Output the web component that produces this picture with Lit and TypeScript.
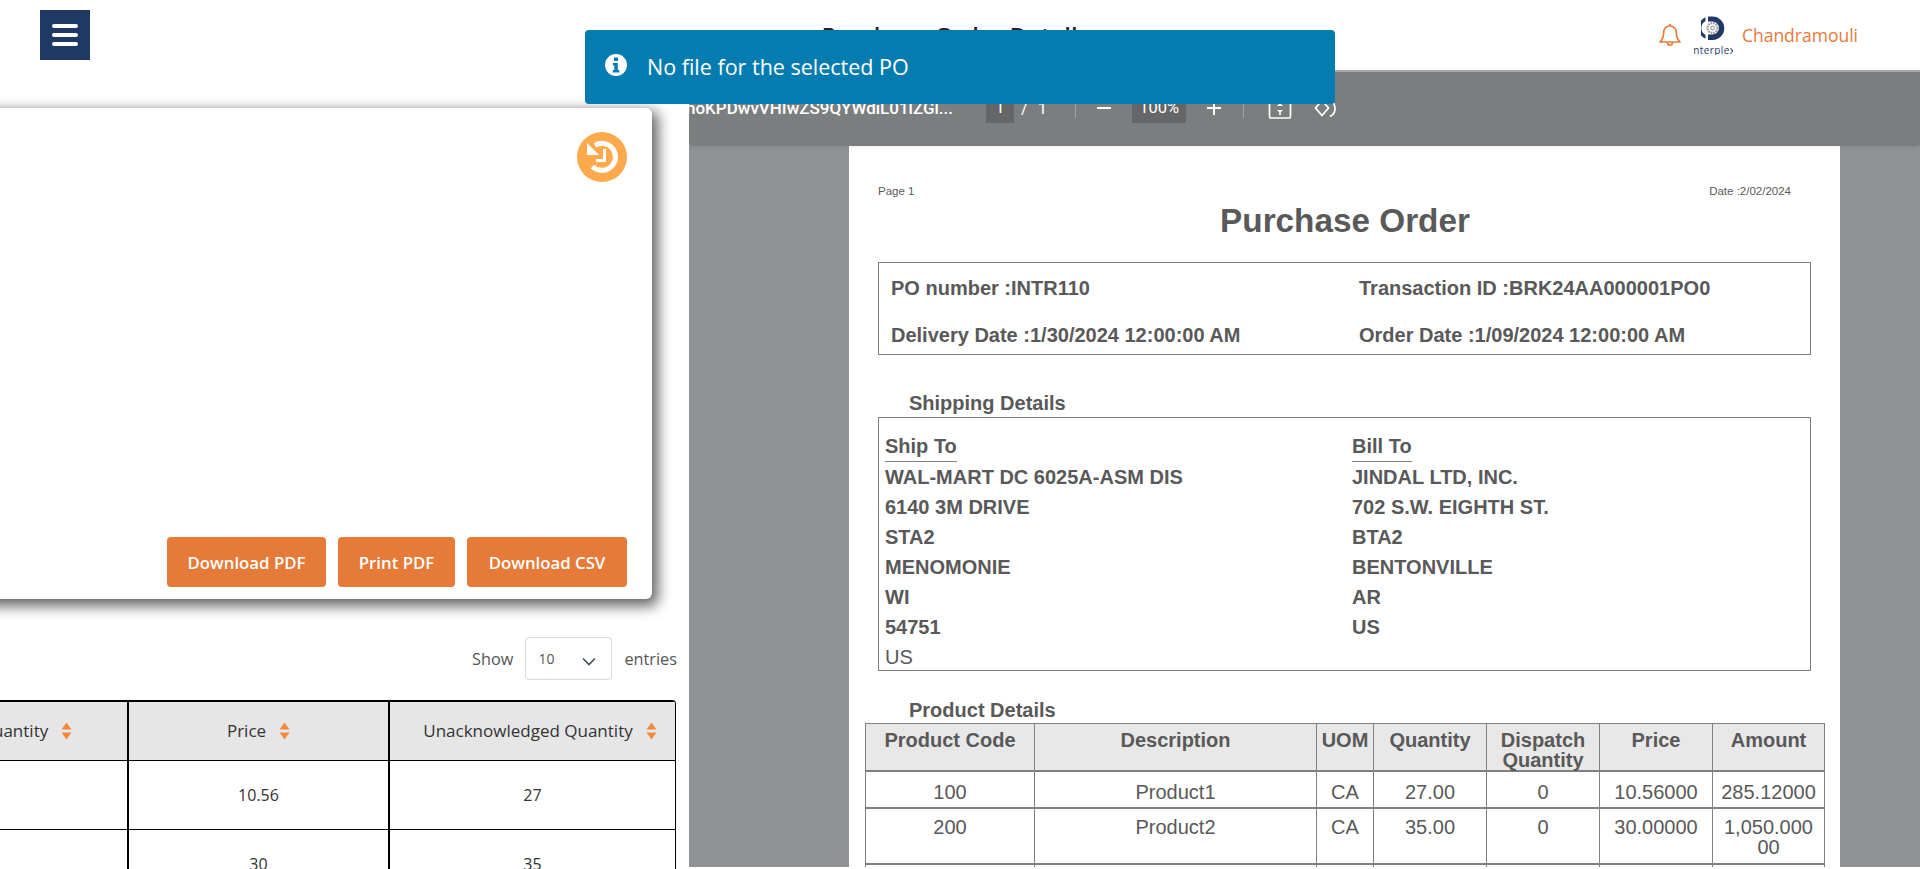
import { LitElement, html, css, svg } from "lit";
import { customElement } from "lit/decorators.js";

const SHIP = ["WAL-MART DC 6025A-ASM DIS", "6140 3M DRIVE", "STA2", "MENOMONIE", "WI", "54751"];
const BILL = ["JINDAL LTD, INC.", "702 S.W. EIGHTH ST.", "BTA2", "BENTONVILLE", "AR", "US"];

const PRODUCTS = [
  ["100", "Product1", "CA", "27.00", "0", "10.56000", "285.12000"],
  ["200", "Product2", "CA", "35.00", "0", "30.00000", "1,050.000 00"],
  ["", "", "", "", "", "", ""],
];

const sortIcon = html`<svg class="sort" viewBox="0 0 11 18" width="11" height="18">
  <path d="M5.5 0.5 10.5 7.5H0.5Z" fill="#f28a3c" />
  <path d="M5.5 17.5 10.5 10.5H0.5Z" fill="#f28a3c" />
</svg>`;

const gear = svg`<circle cx="11.500" cy="12" r="5" fill="none" stroke="#a0a0a0" stroke-width="2.200" stroke-dasharray="1.800 0.800" />
  <circle cx="11.500" cy="12" r="1.800" fill="none" stroke="#a0a0a0" stroke-width="1.200" />`;

@customElement("app-root")
export class AppRoot extends LitElement {
  static styles = css`
    :host {
      display: block;
      position: relative;
      height: 869px;
      overflow: hidden;
      background: #fff;
      font-family: "Open Sans", sans-serif;
      color: #333;
    }
    header {
      height: 70px;
      display: flex;
      align-items: center;
      padding: 0 62px 0 40px;
      box-sizing: border-box;
      background: #fff;
      position: relative;
    }
    .menu {
      width: 50px;
      height: 50px;
      background: #1f3864;
      display: flex;
      align-items: center;
      justify-content: center;
    }
    h1 {
      flex: 1;
      margin: 0;
      text-align: center;
      font-size: 24px;
      font-weight: 600;
      color: #222;
      padding-left: 162px;
    }
    .user {
      display: flex;
      align-items: center;
      color: #e8793a;
      font-size: 17.5px;
    }
    .logo {
      display: flex;
      flex-direction: column;
      align-items: center;
      width: 40px;
      margin: 0 9px 0 12px;
      overflow: hidden;
    }
    .logo span {
      font-size: 10px;
      letter-spacing: 0.4px;
      line-height: 9px;
      margin-top: 6px;
      color: #1f3864;
      white-space: nowrap;
    }
    main {
      display: flex;
      align-items: flex-start;
      height: 799px;
    }
    .left {
      width: 689px;
      height: 799px;
      flex: none;
      overflow: hidden;
      padding-top: 38px;
      box-sizing: border-box;
    }
    .card {
      margin-left: -20px;
      width: 672px;
      height: 491px;
      box-sizing: border-box;
      background: #fff;
      border-radius: 6px;
      box-shadow: 4px 5px 14px 2px rgba(0, 0, 0, 0.62);
      padding: 24px 25px 12px 0;
      display: flex;
      flex-direction: column;
      justify-content: space-between;
      align-items: flex-end;
    }
    .restart {
      width: 50px;
      height: 50px;
      display: block;
    }
    .actions {
      display: flex;
      gap: 12px;
    }
    .actions button {
      height: 50px;
      border: none;
      border-radius: 4px;
      background: #e67a38;
      color: #fff;
      font: 600 16.800px "Open Sans", sans-serif;
      padding: 0;
    }
    .b1 { width: 159px; }
    .b2 { width: 117px; }
    .b3 { width: 160px; }
    .entries {
      display: flex;
      justify-content: flex-end;
      align-items: center;
      gap: 12px;
      margin: 38px 12px 20px 0;
      height: 43px;
      font-size: 16.300px;
      color: #555;
    }
    .select {
      width: 87px;
      height: 43px;
      box-sizing: border-box;
      border: 1px solid #d8dadd;
      border-radius: 4px;
      display: flex;
      align-items: center;
      justify-content: space-between;
      padding: 0 15px 0 12px;
      font-size: 14px;
    }
    .select svg { margin-top: 6px; }
    .wrap {
      display: flex;
      justify-content: flex-end;
      margin-right: 13px;
    }
    table.list {
      flex: none;
      width: 746px;
      table-layout: fixed;
      border-collapse: separate;
      border-spacing: 0;
      border-top: 2px solid #000;
      border-right: 1px solid #000;
      border-top-right-radius: 4px;
    }
    .list th,
    .list td {
      border-right: 2px solid #000;
      border-bottom: 1.5px solid #000;
      text-align: center;
      font-size: 16px;
      color: #333;
      padding: 0;
    }
    .list tr > :last-child { border-right: none; }
    .list th {
      height: 56px;
      padding-bottom: 2px;
      background: #e6e6e6;
      font-size: 17px;
      font-weight: 500;
      white-space: nowrap;
    }
    .list th:first-child { padding-right: 4px; }
    .list th:last-child { padding-left: 15px; }
    .list td { height: 68px; }
    .sort {
      margin-left: 13px;
      vertical-align: -3px;
    }
    .viewer {
      flex: 1;
      height: 797px;
      background: #8f9294;
      overflow: hidden;
      border-top: 2px solid #a6a8a9;
      box-sizing: border-box;
    }
    .toolbar {
      height: 72px;
      background: #7b7e7f;
      box-shadow: 0 1px 4px rgba(0, 0, 0, 0.25);
      display: flex;
      align-items: center;
      color: #fff;
      font: 400 16.500px Roboto, sans-serif;
      position: relative;
    }
    .name {
      width: 300px;
      flex: none;
      white-space: nowrap;
      overflow: hidden;
      margin-left: -3px;
      font-size: 17px;
      font-weight: 500;
    }
    .tb-box {
      background: #646667;
      height: 20px;
      line-height: 20px;
      text-align: center;
      display: inline-block;
      padding: 5px 0;
    }
    .pg { width: 28px; }
    .zoom { width: 54px; margin: 0 20px; }
    .sep {
      width: 1px;
      height: 20px;
      background: #a2a4a5;
    }
    .sep1 { margin: 0 20px 0 28px; }
    .sep2 { margin: 0 24px 0 21px; }
    .slash { margin: 0 10px 0 7px; }
    .icon { display: block; flex: none; }
    .rotate { margin-left: 22px; }
    .page {
      margin: 2px 0 0 160px;
      width: 991px;
      background: #fff;
      color: #595959;
      font-family: "Liberation Sans", Arial, sans-serif;
      font-size: 20px;
      font-weight: 700;
      padding-top: 38px;
      box-sizing: border-box;
      height: 900px;
    }
    .meta {
      display: flex;
      justify-content: space-between;
      font-size: 11.500px;
      font-weight: 400;
      line-height: 14px;
      margin: 0 49px 2px 29px;
    }
    h2 {
      margin: 0;
      text-align: center;
      font-size: 33.300px;
      line-height: 42px;
      width: 992px;
    }
    .box {
      margin: 20px 0 0 29px;
      width: 933px;
      box-sizing: border-box;
      border: 1px solid #808080;
    }
    .info {
      height: 93px;
      display: grid;
      grid-template-columns: 468px 1fr;
      grid-auto-rows: 47px;
      padding: 1.500px 0 0 12px;
    }
    .info div, .addr div {
      white-space: nowrap;
    }
    .info div { line-height: 47px; }
    .sec {
      margin: 36px 0 2px 60px;
      line-height: 24px;
      font-size: 20px;
    }
    .addr {
      margin-top: 0;
      height: 254px;
      display: grid;
      grid-template-columns: 467px 1fr;
      padding: 13px 0 0 6px;
    }
    .addr div { line-height: 30px; }
    .addr .hd { line-height: 31px; }
    .addr .hd span {
      display: inline-block;
      line-height: 29px;
      border-bottom: 1px solid #808080;
    }
    .addr .reg { font-weight: 400; }
    .sec.second { margin: 27px 0 1px 60px; }
    table.po {
      margin-left: 16px;
      width: 959px;
      table-layout: fixed;
      border-collapse: collapse;
      font-size: 20px;
      line-height: 20px;
    }
    .po th, .po td {
      border: 1px solid #808080;
      text-align: center;
      vertical-align: top;
      padding: 6px 0 0;
    }
    .po th {
      background: #e8e8e8;
      height: 40px;
      border-bottom-width: 2px;
    }
    .po td { font-weight: 400; }
    .po tr:nth-child(1) td { padding-top: 10px; height: 25px; border-bottom-width: 2px; }
    .po tr:nth-child(2) td { padding-top: 8px; height: 46px; border-bottom-width: 2px; }
    .po tr:nth-child(3) td { height: 60px; }
    .toast {
      position: absolute;
      left: 585px;
      top: 30px;
      width: 750px;
      height: 74px;
      box-sizing: border-box;
      background: #047cb0;
      border-radius: 4px;
      color: #fff;
      display: flex;
      align-items: center;
      gap: 20px;
      padding: 0 0 4px 20px;
      font-size: 21.500px;
    }
    .toast span { padding-top: 2px; }
  `;

  render() {
    return html`
      <header>
        <div class="menu">
          <svg width="26" height="24" viewBox="0 0 26 24">
            <rect x="0" y="1" width="26" height="4" rx="2" fill="#fff" />
            <rect x="0" y="10" width="26" height="4" rx="2" fill="#fff" />
            <rect x="0" y="19" width="26" height="4" rx="2" fill="#fff" />
          </svg>
        </div>
        <h1>Purchase Order Details</h1>
        <div class="user">
          <svg width="22" height="24" viewBox="0 0 22 24" fill="none" stroke="#ea7a38" stroke-width="1.700" stroke-linejoin="round">
            <path d="M11 3C7 3 4.600 6 4.600 10c0 5-1.600 7-3.600 9h20c-2-2-3.600-4-3.600-9C17.400 6 15 3 11 3Z" />
            <path d="M11 1v2M8.500 19.500a2.500 2.500 0 0 0 5 0" />
          </svg>
          <div class="logo">
            <svg width="24" height="24" viewBox="0 0 24 24">
              <path d="M4.500 1.200A12 12 0 0 0 4.500 22.800V19A8 8 0 0 1 4.500 5Z" fill="#1f3864" />
              <path d="M7 0.500H11.500A11.750 11.750 0 0 1 11.500 24H7V18.500H11.500A6.500 6.500 0 0 0 11.500 5.500H7Z" fill="#1f3864" />
              ${gear}
            </svg>
            <span>interplex</span>
          </div>
          <span>Chandramouli</span>
        </div>
      </header>
      <main>
        <section class="left">
          <div class="card">
            <svg class="restart" viewBox="0 0 50 50">
              <circle cx="25" cy="25" r="25" fill="#ffa94d" />
              <path d="M18 13.300A13.500 13.500 0 1 1 15.500 34.500" fill="none" stroke="#fff" stroke-width="5" />
              <path d="M10 11V23H22Z" fill="#fff" />
              <path d="M27.500 17V28.500H19" fill="none" stroke="#fff" stroke-width="3" />
            </svg>
            <div class="actions">
              <button class="b1">Download PDF</button>
              <button class="b2">Print PDF</button>
              <button class="b3">Download CSV</button>
            </div>
          </div>
          <div class="entries">
            <span>Show</span>
            <div class="select">
              <span>10</span>
              <svg width="14" height="9" viewBox="0 0 14 9" fill="none" stroke="#495057" stroke-width="1.700">
                <path d="M1 1.500 7 7.500 13 1.500" />
              </svg>
            </div>
            <span>entries</span>
          </div>
          <div class="wrap">
            <table class="list">
              <colgroup>
                <col style="width:200px" />
                <col style="width:261px" />
                <col style="width:285px" />
              </colgroup>
              <thead>
                <tr>
                  <th>Quantity${sortIcon}</th>
                  <th>Price${sortIcon}</th>
                  <th>Unacknowledged Quantity${sortIcon}</th>
                </tr>
              </thead>
              <tbody>
                <tr><td></td><td>10.56</td><td>27</td></tr>
                <tr><td></td><td>30</td><td>35</td></tr>
              </tbody>
            </table>
          </div>
        </section>
        <section class="viewer">
          <div class="toolbar">
            <div class="name">hoKPDwvVHIwZS9QYWdiL01lZGl...</div>
            <span class="tb-box pg">1</span>
            <span class="slash">/</span>
            <span>1</span>
            <span class="sep sep1"></span>
            <svg class="icon" width="16" height="16" viewBox="0 0 16 16"><rect x="1" y="7" width="14" height="2" fill="#fff" /></svg>
            <span class="tb-box zoom">100%</span>
            <svg class="icon" width="16" height="16" viewBox="0 0 16 16"><path d="M7 1h2v6h6v2H9v6H7V9H1V7h6Z" fill="#fff" /></svg>
            <span class="sep sep2"></span>
            <svg class="icon" width="24" height="24" viewBox="0 0 24 24" fill="none" stroke="#fff" stroke-width="1.700">
              <rect x="1.500" y="2" width="21" height="20" rx="1.500" />
              <path d="M12 5v2.500M12 16.500V19" />
              <path d="M9 10h6l-3-3ZM9 14h6l-3 3Z" fill="#fff" stroke="none" />
            </svg>
            <svg class="icon rotate" width="24" height="24" viewBox="0 0 24 24" fill="none" stroke="#fff" stroke-width="1.700">
              <path d="M8 4.500 1.500 12 8 19.500 14.500 12Z" />
              <path d="M13 3.500a9 9 0 0 1 3 17" />
            </svg>
          </div>
          <div class="page">
            <div class="meta"><span>Page 1</span><span>Date :2/02/2024</span></div>
            <h2>Purchase Order</h2>
            <div class="box info">
              <div>PO number :INTR110</div>
              <div>Transaction ID :BRK24AA000001PO0</div>
              <div>Delivery Date :1/30/2024 12:00:00 AM</div>
              <div>Order Date :1/09/2024 12:00:00 AM</div>
            </div>
            <div class="sec">Shipping Details</div>
            <div class="box addr">
              <div class="hd"><span>Ship To</span></div>
              <div class="hd"><span>Bill To</span></div>
              ${SHIP.map((s, i) => html`<div>${s}</div><div>${BILL[i]}</div>`)}
              <div class="reg">US</div>
            </div>
            <div class="sec second">Product Details</div>
            <table class="po">
              <colgroup>
                ${[169, 282, 57, 113, 113, 113, 112].map((w) => html`<col style="width:${w}px" />`)}
              </colgroup>
              <thead>
                <tr>
                  <th>Product Code</th>
                  <th>Description</th>
                  <th>UOM</th>
                  <th>Quantity</th>
                  <th>Dispatch Quantity</th>
                  <th>Price</th>
                  <th>Amount</th>
                </tr>
              </thead>
              <tbody>
                ${PRODUCTS.map((r) => html`<tr>${r.map((c) => html`<td>${c}</td>`)}</tr>`)}
              </tbody>
            </table>
          </div>
        </section>
      </main>
      <div class="toast">
        <svg width="22" height="22" viewBox="0 0 22 22">
          <path fill="#fff" fill-rule="evenodd" d="M11 0a11 11 0 1 0 0 22A11 11 0 0 0 11 0ZM9 3.500h4V7H9ZM7.800 9h5v7h1.500v2.500H7.800V16h1.500v-4.500H7.800Z" />
        </svg>
        <span>No file for the selected PO</span>
      </div>
    `;
  }
}
